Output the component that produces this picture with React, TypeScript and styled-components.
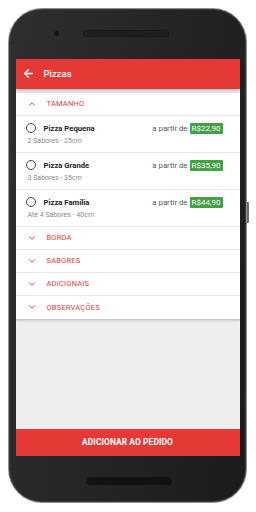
import React from "react";
import styled, { createGlobalStyle } from "styled-components";
import { ArrowLeft, ChevronDown, ChevronUp } from "lucide-react";

const GlobalStyle = createGlobalStyle`
  html, body {
    margin: 0;
    padding: 0;
    background: #ffffff;
  }
  * {
    box-sizing: border-box;
  }
`;

const RED = "#e53935";

type Size = {
  name: string;
  info: string;
  price: string;
};

const sizes: Size[] = [
  { name: "Pizza Pequena", info: "2 Sabores - 25cm", price: "R$22,90" },
  { name: "Pizza Grande", info: "3 Sabores - 35cm", price: "R$35,90" },
  { name: "Pizza Família", info: "Até 4 Sabores - 40cm", price: "R$44,90" },
];

const sections = ["BORDA", "SABORES", "ADICIONAIS", "OBSERVAÇÕES"];

const App = (): JSX.Element => {
  return (
    <Stage>
      <GlobalStyle />
      <Phone>
        <SideButton />
        <PhoneTop>
          <Camera />
          <Speaker />
        </PhoneTop>
        <Screen>
          <Toolbar>
            <ArrowLeft size={13} strokeWidth={2.6} color="#fff" />
            <Title>Pizzas</Title>
          </Toolbar>
          <Content>
            <Card>
              <SectionHeader>
                <ChevronUp size={10} strokeWidth={2.4} color={RED} />
                <SectionLabel>TAMANHO</SectionLabel>
              </SectionHeader>
              {sizes.map((s) => (
                <Item key={s.name}>
                  <ItemLine>
                    <Radio />
                    <ItemName>{s.name}</ItemName>
                    <FromLabel>a partir de</FromLabel>
                    <Price>{s.price}</Price>
                  </ItemLine>
                  <ItemInfo>{s.info}</ItemInfo>
                </Item>
              ))}
              {sections.map((label) => (
                <SectionHeader key={label}>
                  <ChevronDown size={10} strokeWidth={2.4} color={RED} />
                  <SectionLabel>{label}</SectionLabel>
                </SectionHeader>
              ))}
            </Card>
          </Content>
          <AddButton>ADICIONAR AO PEDIDO</AddButton>
        </Screen>
        <PhoneBottom>
          <BottomSpeaker />
        </PhoneBottom>
      </Phone>
    </Stage>
  );
};

const Stage = styled.div`
  width: 256px;
  height: 512px;
  padding: 8px 0 0 8px;
  font-family: Roboto, "Liberation Sans", sans-serif;
`;

const Phone = styled.div`
  position: relative;
  width: 239px;
  height: 495px;
  border-radius: 34px;
  border: 1.5px solid #8e8e8e;
  box-shadow: inset 0 0 0 1px #3a3a3a;
  background: linear-gradient(100deg, #2f2f2f 0%, #262626 45%, #1b1b1b 100%);
  display: flex;
  flex-direction: column;
  padding: 0 5.5px 0 6.5px;
`;

const SideButton = styled.div`
  position: absolute;
  right: -3px;
  top: 193px;
  width: 2px;
  height: 21px;
  background: #6e6e6e;
  border-radius: 0 1px 1px 0;
`;

const PhoneTop = styled.div`
  height: 49.5px;
  display: flex;
  align-items: flex-start;
  padding: 20.5px 0 0 38px;
  gap: 24px;
`;

const Camera = styled.div`
  width: 5px;
  height: 5px;
  margin-top: 1px;
  border-radius: 50%;
  background: #12122a;
`;

const Speaker = styled.div`
  width: 86px;
  height: 7px;
  border-radius: 4px;
  background: #1f1f1f;
  box-shadow: inset 0 0 0 0.5px #151515;
`;

const Screen = styled.div`
  width: 224px;
  height: 397px;
  display: flex;
  flex-direction: column;
  background: #eeeeee;
  overflow: hidden;
`;

const Toolbar = styled.div`
  height: 30px;
  flex-shrink: 0;
  display: flex;
  align-items: center;
  gap: 9px;
  padding-left: 6px;
  background: ${RED};
  box-shadow: 0 1px 3px rgba(0, 0, 0, 0.3);
  position: relative;
  z-index: 1;
`;

const Title = styled.span`
  color: #ffffff;
  font-size: 9.5px;
  font-weight: 500;
`;

const Content = styled.div`
  flex: 1;
  padding-top: 4px;
`;

const Card = styled.div`
  background: #ffffff;
  box-shadow: 0 1px 3px rgba(0, 0, 0, 0.25);
`;

const SectionHeader = styled.div`
  height: 23px;
  display: flex;
  align-items: center;
  gap: 10px;
  padding-left: 11px;
  border-bottom: 1px solid #e6e6e6;
  &:last-child {
    border-bottom: none;
  }
`;

const SectionLabel = styled.span`
  color: ${RED};
  font-size: 7.5px;
  letter-spacing: 0.2px;
`;

const Item = styled.div`
  height: 37px;
  padding: 6px 17px 0 10px;
  border-bottom: 1px solid #e6e6e6;
`;

const ItemLine = styled.div`
  height: 13px;
  display: flex;
  align-items: center;
`;

const Radio = styled.div`
  width: 10px;
  height: 10px;
  border-radius: 50%;
  border: 1.3px solid #444;
  margin-right: 8px;
`;

const ItemName = styled.span`
  flex: 1;
  font-size: 7.7px;
  font-weight: 700;
  color: #222;
`;

const FromLabel = styled.span`
  font-size: 7.8px;
  color: #555;
  margin-right: 2px;
`;

const Price = styled.span`
  background: #43a047;
  color: #ffffff;
  font-size: 8px;
  line-height: 11px;
  padding: 0 2px;
  border-radius: 1px;
`;

const ItemInfo = styled.div`
  height: 13px;
  line-height: 13px;
  padding-left: 2px;
  font-size: 7px;
  color: #8a8a8a;
`;

const AddButton = styled.div`
  height: 27px;
  flex-shrink: 0;
  display: flex;
  align-items: center;
  justify-content: center;
  background: ${RED};
  color: #ffffff;
  font-size: 8.4px;
  font-weight: 700;
  letter-spacing: 0.1px;
`;

const PhoneBottom = styled.div`
  flex: 1;
  display: flex;
  justify-content: center;
  padding: 21px 0 0 2px;
`;

const BottomSpeaker = styled.div`
  width: 86px;
  height: 8px;
  border-radius: 4px;
  background: #121212;
`;

export default App;
